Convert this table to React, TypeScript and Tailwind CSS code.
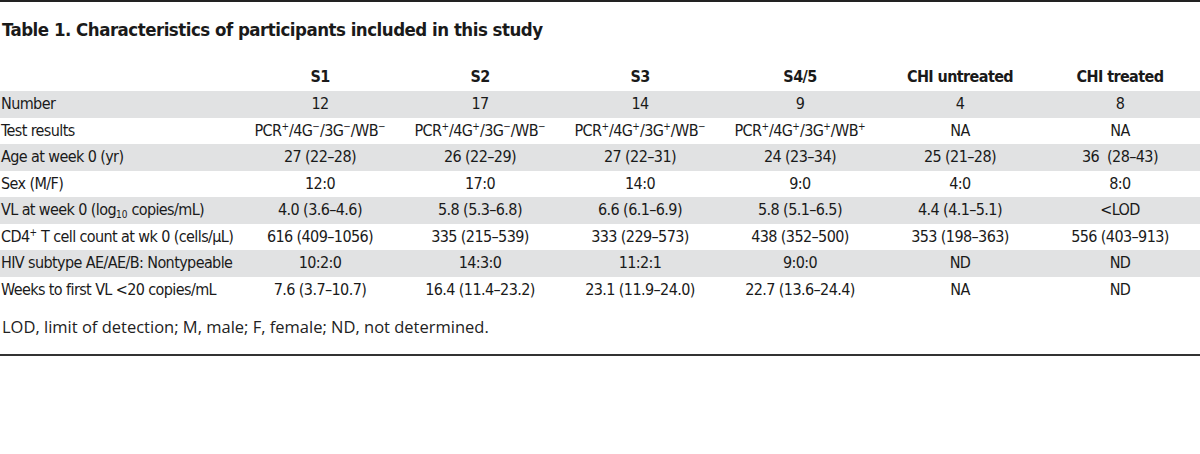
import React from "react";

const P = ({ s }: { s: string }) => <sup className="text-[10px] leading-none relative -top-[6px] tracking-normal">{s}</sup>;

type Row = { label: React.ReactNode; vals: React.ReactNode[] };

const tr = (a: string, b: string, c: string) => (
  <span>
    PCR<P s="+" />/4G<P s={a} />/3G<P s={b} />/WB<P s={c} />
  </span>
);

const rows: Row[] = [
  { label: "Number", vals: ["12", "17", "14", "9", "4", "8"] },
  {
    label: "Test results",
    vals: [tr("−", "−", "−"), tr("+", "−", "−"), tr("+", "+", "−"), tr("+", "+", "+"), "NA", "NA"],
  },
  { label: "Age at week 0 (yr)", vals: ["27 (22–28)", "26 (22–29)", "27 (22–31)", "24 (23–34)", "25 (21–28)", "36\u00a0 (28–43)"] },
  { label: "Sex (M/F)", vals: ["12:0", "17:0", "14:0", "9:0", "4:0", "8:0"] },
  {
    label: (
      <span>
        VL at week 0 (log<sub className="text-[10px] leading-none tracking-normal">10</sub> copies/mL)
      </span>
    ),
    vals: ["4.0 (3.6–4.6)", "5.8 (5.3–6.8)", "6.6 (6.1–6.9)", "5.8 (5.1–6.5)", "4.4 (4.1–5.1)", "<LOD"],
  },
  {
    label: (
      <span>
        CD4<P s="+" /> T cell count at wk 0 (cells/μL)
      </span>
    ),
    vals: ["616 (409–1056)", "335 (215–539)", "333 (229–573)", "438 (352–500)", "353 (198–363)", "556 (403–913)"],
  },
  { label: "HIV subtype AE/AE/B: Nontypeable", vals: ["10:2:0", "14:3:0", "11:2:1", "9:0:0", "ND", "ND"] },
  { label: "Weeks to first VL <20 copies/mL", vals: ["7.6 (3.7–10.7)", "16.4 (11.4–23.2)", "23.1 (11.9–24.0)", "22.7 (13.6–24.4)", "NA", "ND"] },
];

const heads = ["S1", "S2", "S3", "S4/5", "CHI untreated", "CHI treated"];

const COND = { fontFamily: '"DejaVu Sans Condensed", "DejaVu Sans", sans-serif', fontStretch: "condensed" } as const;

export default function App() {
  return (
    <div className="w-[1200px] h-[454px] bg-white text-[#1a1a1a]">
      <div className="border-t-2 border-[#222]" />
      <div className="pt-[16px] pl-[2px] text-[18.5px] leading-[24px] font-bold tracking-[-0.5px]" style={COND}>
        Table 1. Characteristics of participants included in this study
      </div>
      <div style={COND} className="mt-[23px] text-[16px] tracking-[-0.6px]">
        <div className="grid grid-cols-[240px_repeat(6,160px)] h-[26px] pb-[2px] items-center font-bold">
          <div />
          {heads.map((h) => (
            <div key={h} className="text-center">
              {h}
            </div>
          ))}
        </div>
        {rows.map((r, i) => (
          <div
            key={i}
            className={`grid grid-cols-[240px_repeat(6,160px)] h-[26.5px] items-center ${i % 2 === 0 ? "bg-[#e1e2e3]" : "bg-white"}`}
          >
            <div className="pl-[1px] whitespace-nowrap">{r.label}</div>
            {r.vals.map((v, j) => (
              <div key={j} className="text-center whitespace-nowrap">
                {v}
              </div>
            ))}
          </div>
        ))}
      </div>
      <div className="pt-[13px] pl-[2px] text-[16.5px] leading-[22px] text-[#222]" style={{ fontFamily: '"Open Sans", sans-serif' }}>
        LOD, limit of detection; M, male; F, female; ND, not determined.
      </div>
      <div className="mt-[16px] border-t-2 border-[#333]" />
    </div>
  );
}
